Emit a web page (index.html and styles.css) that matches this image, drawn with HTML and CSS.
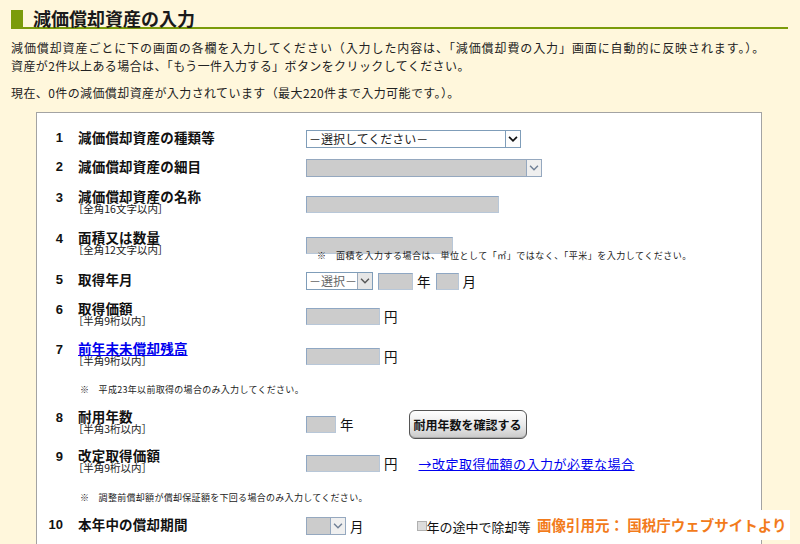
FILE: index.html
```html
<!DOCTYPE html>
<html lang="ja">
<head>
<meta charset="utf-8">
<title>減価償却資産の入力</title>
<link rel="stylesheet" href="styles.css">
</head>
<body>
<div class="page">
  <div class="heading">
    <span class="mark"></span>
    <h1>減価償却資産の入力</h1>
  </div>
  <p class="intro"><span class="wide">減価償却資産ごとに下の画面の各欄を入力してください（入力した内容は、「減価償却費の入力」画面に自動的に反映されます。）。</span><br>資産が2件以上ある場合は、「もう一件入力する」ボタンをクリックしてください。</p>
  <p class="intro count">現在、0件の減価償却資産が入力されています（最大220件まで入力可能です。）。</p>

  <div class="formbox">
    <div class="row">
      <span class="num">1</span>
      <div class="label"><span class="lbl">減価償却資産の種類等</span></div>
      <div class="ctrl">
        <div class="select w215"><span class="val">－選択してください－</span><span class="btn dark"><svg viewBox="0 0 16 16" width="14" height="14"><path d="M3.5 5.5 L8 10 L12.5 5.5" fill="none" stroke="#111" stroke-width="2"/></svg></span></div>
      </div>
    </div>

    <div class="row mt15">
      <span class="num">2</span>
      <div class="label"><span class="lbl">減価償却資産の細目</span></div>
      <div class="ctrl">
        <div class="select off w236"><span class="val"></span><span class="btn"><svg viewBox="0 0 16 16" width="14" height="14"><path d="M3.5 5.5 L8 10 L12.5 5.5" fill="none" stroke="#6f7f95" stroke-width="1.6"/></svg></span></div>
      </div>
    </div>

    <div class="row two mt17">
      <span class="num">3</span>
      <div class="label"><span class="lbl">減価償却資産の名称</span><span class="sub">［全角16文字以内］</span></div>
      <div class="ctrl"><span class="input w193"></span></div>
    </div>

    <div class="row two mt17">
      <span class="num">4</span>
      <div class="label"><span class="lbl">面積又は数量</span><span class="sub">［全角12文字以内］</span></div>
      <div class="ctrl"><span class="input w147"></span></div>
    </div>
    <p class="note note-area">※　面積を入力する場合は、単位として「㎡」ではなく、「平米」を入力してください。</p>

    <div class="row mt11">
      <span class="num">5</span>
      <div class="label"><span class="lbl">取得年月</span></div>
      <div class="ctrl">
        <div class="select w67"><span class="val muted">－選択－</span><span class="btn light"><svg viewBox="0 0 16 16" width="14" height="14"><path d="M3.5 5.5 L8 10 L12.5 5.5" fill="none" stroke="#555" stroke-width="1.6"/></svg></span></div>
        <span class="input w35 ml5"></span><span class="unit">年</span>
        <span class="input w23 ml5"></span><span class="unit">月</span>
      </div>
    </div>

    <div class="row two mt16">
      <span class="num">6</span>
      <div class="label"><span class="lbl">取得価額</span><span class="sub">［半角9桁以内］</span></div>
      <div class="ctrl"><span class="input w74"></span><span class="unit">円</span></div>
    </div>

    <div class="row two mt16">
      <span class="num">7</span>
      <div class="label"><a class="lbl link" href="#">前年末未償却残高</a><span class="sub">［半角9桁以内］</span></div>
      <div class="ctrl"><span class="input w74"></span><span class="unit">円</span></div>
    </div>
    <p class="note note-left mt19">※　平成23年以前取得の場合のみ入力してください。</p>

    <div class="row two mt15">
      <span class="num">8</span>
      <div class="label"><span class="lbl">耐用年数</span><span class="sub">［半角3桁以内］</span></div>
      <div class="ctrl">
        <span class="input w30"></span><span class="unit">年</span>
        <button class="check-btn" type="button">耐用年数を確認する</button>
      </div>
    </div>

    <div class="row two mt15">
      <span class="num">9</span>
      <div class="label"><span class="lbl">改定取得価額</span><span class="sub">［半角9桁以内］</span></div>
      <div class="ctrl">
        <span class="input w74"></span><span class="unit">円</span>
        <a class="side-link" href="#">→改定取得価額の入力が必要な場合</a>
      </div>
    </div>
    <p class="note note-left mt20">※　調整前償却額が償却保証額を下回る場合のみ入力してください。</p>

    <div class="row mt14">
      <span class="num">10</span>
      <div class="label"><span class="lbl">本年中の償却期間</span></div>
      <div class="ctrl">
        <div class="select off w38"><span class="val"></span><span class="btn"><svg viewBox="0 0 16 16" width="14" height="14"><path d="M3.5 5.5 L8 10 L12.5 5.5" fill="none" stroke="#6f7f95" stroke-width="1.6"/></svg></span></div>
        <span class="unit">月</span>
        <span class="checkbox"></span><span class="cb-text">年の途中で除却等した場合</span>
      </div>
    </div>
  </div>
</div>
<div class="credit">画像引用元： 国税庁ウェブサイトより</div>
</body>
</html>
```
FILE: styles.css
```css
html, body {
  margin: 0;
  height: 544px;
  overflow: hidden;
}
body {
  background: #fff7dc;
  color: #111;
  font-family: "Noto Sans CJK JP", "Noto Sans", sans-serif;
  position: relative;
}
.page {
  padding: 10px 0 0 11px;
}
.heading {
  display: flex;
  align-items: flex-start;
  width: 777px;
  height: 17px;
  border-bottom: 2px solid #7b9b0a;
}
.heading .mark {
  width: 12px;
  height: 17px;
  background: #7b9b0a;
}
.heading h1 {
  margin: 0 0 0 10px;
  font-size: 18px;
  line-height: 17px;
  font-weight: 700;
  color: #1a1a1a;
}
.intro {
  margin: 10px 0 0;
  font-size: 12px;
  line-height: 18px;
  letter-spacing: 0.4px;
  color: #222;
}
.intro .wide {
  letter-spacing: 0.9px;
}
.intro.count {
  margin-top: 10px;
  line-height: 16px;
}
.formbox {
  margin: 11px 0 0 25px;
  width: 726px;
  box-sizing: border-box;
  background: #fff;
  border: 1px solid #a3a3a3;
  border-bottom: none;
  padding: 17px 0 60px;
}
.row {
  display: flex;
  align-items: center;
  height: 14px;
}
.row.two {
  height: 24px;
}
.num {
  align-self: flex-start;
  width: 26px;
  padding-top: 1px;
  text-align: right;
  font-family: "Liberation Sans", Arial, sans-serif;
  font-weight: 700;
  font-size: 13px;
  line-height: 13px;
  color: #111;
}
.label {
  margin-left: 15px;
  width: 228px;
  flex: none;
  align-self: flex-start;
}
.lbl {
  display: block;
  font-size: 13.5px;
  font-weight: 700;
  line-height: 13px;
  letter-spacing: 0.2px;
  color: #111;
  white-space: nowrap;
}
.row:not(.two) .lbl {
  line-height: 14px;
}
.lbl.link {
  color: #0000ee;
  text-decoration: underline;
}
.sub {
  display: block;
  font-size: 10.5px;
  line-height: 11px;
  font-feature-settings: "palt";
  color: #222;
  white-space: nowrap;
}
.ctrl {
  display: flex;
  align-items: center;
  margin-top: 4px;
  white-space: nowrap;
}
.select {
  display: flex;
  height: 18px;
  box-sizing: border-box;
  border: 1px solid #7f9db9;
  background: #fff;
  font-size: 12px;
}
.select .val {
  flex: 1;
  padding-left: 2px;
  line-height: 16px;
  color: #222;
}
.select .val.muted {
  color: #666;
}
.select .btn {
  width: 16px;
  box-sizing: border-box;
  display: flex;
  align-items: center;
  justify-content: center;
  background: #f2f2f2;
  border-left: 1px solid #a9b9cc;
}
.select .btn.dark {
  background: #fdfdfd;
  border: 1px solid #7f9db9;
  margin: -1px -1px -1px 0;
  height: 18px;
}
.select .btn.light {
  background: #e6e6e6;
  border-left: 1px solid #9aa9bb;
}
.select.off {
  background: #cccccc;
  border-color: #95a8bf;
}
.select.off .btn {
  background: #efefef;
  border: 1px solid #95a8bf;
  margin: -1px -1px -1px 0;
  height: 18px;
}
.w215 { width: 215px; }
.w236 { width: 236px; }
.w67 { width: 67px; }
.w38 { width: 40px; }
.input {
  display: block;
  height: 17px;
  box-sizing: border-box;
  background: #cccccc;
  border: 1px solid #8fa7c3;
  border-right-color: #b8c7d8;
  border-bottom-color: #b8c7d8;
}
.w193 { width: 193px; }
.w147 { width: 147px; }
.w74 { width: 74px; }
.w35 { width: 35px; }
.w30 { width: 30px; }
.w23 { width: 23px; }
.ml5 { margin-left: 5px; }
.unit {
  margin-left: 4px;
  font-size: 13.5px;
  line-height: 17px;
  color: #111;
}
.check-btn {
  margin-left: 55px;
  width: 118px;
  height: 29px;
  border: 1px solid #555;
  border-radius: 6px;
  background: linear-gradient(#ffffff, #e8e8e8 55%, #c9c9c9);
  box-shadow: inset 0 -1px 0 #aaa;
  font-family: "Noto Sans CJK JP", sans-serif;
  font-size: 12px;
  font-weight: 700;
  color: #111;
  padding: 0;
}
.side-link {
  margin-left: 21px;
  font-size: 13px;
  letter-spacing: 0.5px;
  color: #0000ee;
  text-decoration: underline;
}
.checkbox {
  margin-left: 53px;
  width: 10px;
  height: 10px;
  box-sizing: border-box;
  background: #dcdcdc;
  border: 1px solid #b0b0b0;
}
.cb-text {
  font-size: 13px;
  color: #111;
}
.note {
  margin: 0;
  font-size: 9px;
  line-height: 10px;
  letter-spacing: 0.3px;
  color: #222;
  white-space: nowrap;
}
.note-area {
  margin: -4px 0 0 280px;
  letter-spacing: 0.5px;
}
.note-left {
  margin-left: 43px;
}
.mt11 { margin-top: 11px; }
.mt14 { margin-top: 14px; }
.mt15 { margin-top: 15px; }
.mt16 { margin-top: 16px; }
.mt17 { margin-top: 17px; }
.mt19 { margin-top: 19px; }
.mt20 { margin-top: 20px; }
.credit {
  position: absolute;
  left: 532px;
  top: 510px;
  width: 258px;
  height: 30px;
  box-sizing: border-box;
  background: #fff;
  padding-left: 5px;
  font-size: 14.5px;
  line-height: 30px;
  font-weight: 700;
  color: #f27b1b;
  white-space: nowrap;
}
```
